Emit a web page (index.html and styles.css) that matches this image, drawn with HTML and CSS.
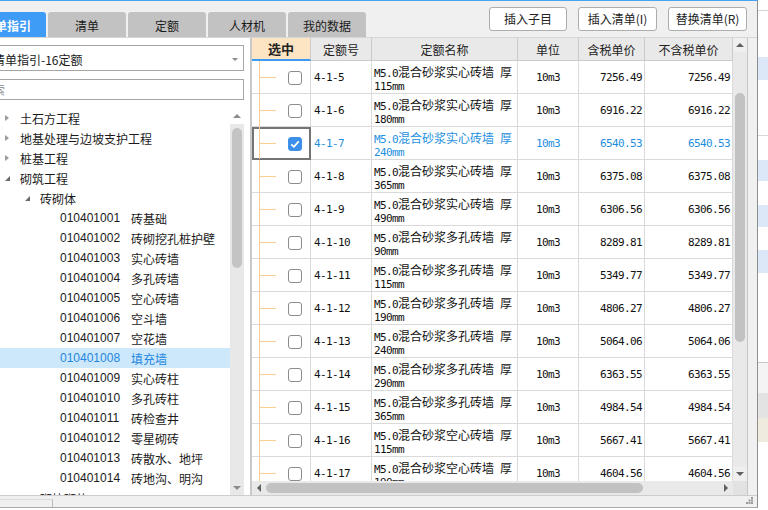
FILE: index.html
```html
<!DOCTYPE html>
<html lang="zh-CN">
<head>
<meta charset="utf-8">
<title>清单指引</title>
<link rel="stylesheet" href="styles.css">
</head>
<body>
<div class="desk">
  <div class="app">
    <div class="topbar">
      <div class="tabs">
        <div class="tab active">清单指引</div>
        <div class="tab">清单</div>
        <div class="tab">定额</div>
        <div class="tab">人材机</div>
        <div class="tab">我的数据</div>
      </div>
      <div class="actions">
        <button class="btn w78">插入子目</button>
        <button class="btn w79">插入清单(I)</button>
        <button class="btn w79">替换清单(R)</button>
      </div>
    </div>
    <div class="main">
      <div class="left">
        <div class="select"><span class="sel-text">清单指引-16定额</span><span class="caret"></span></div>
        <div class="search"><span class="ph">搜索</span></div>
        <div class="tree">
          <div class="tree-list">
            <div class="trow l1"><span class="tw"><span class="ar-r"></span></span>土石方工程</div>
            <div class="trow l1"><span class="tw"><span class="ar-r"></span></span>地基处理与边坡支护工程</div>
            <div class="trow l1"><span class="tw"><span class="ar-r"></span></span>桩基工程</div>
            <div class="trow l1"><span class="tw"><span class="ar-d"></span></span>砌筑工程</div>
            <div class="trow l2"><span class="tw"><span class="ar-d"></span></span>砖砌体</div>
            <div class="trow l3"><span class="code">010401001</span>砖基础</div>
            <div class="trow l3"><span class="code">010401002</span>砖砌挖孔桩护壁</div>
            <div class="trow l3"><span class="code">010401003</span>实心砖墙</div>
            <div class="trow l3"><span class="code">010401004</span>多孔砖墙</div>
            <div class="trow l3"><span class="code">010401005</span>空心砖墙</div>
            <div class="trow l3"><span class="code">010401006</span>空斗墙</div>
            <div class="trow l3"><span class="code">010401007</span>空花墙</div>
            <div class="trow l3 on"><span class="code">010401008</span>填充墙</div>
            <div class="trow l3"><span class="code">010401009</span>实心砖柱</div>
            <div class="trow l3"><span class="code">010401010</span>多孔砖柱</div>
            <div class="trow l3"><span class="code">010401011</span>砖检查井</div>
            <div class="trow l3"><span class="code">010401012</span>零星砌砖</div>
            <div class="trow l3"><span class="code">010401013</span>砖散水、地坪</div>
            <div class="trow l3"><span class="code">010401014</span>砖地沟、明沟</div>
            <div class="trow l2"><span class="tw"><span class="ar-d"></span></span>砌块砌体</div>
          </div>
          <div class="tscroll">
            <div class="tbtn top"><span class="up lt"></span></div>
            <div class="ttrack"><div class="tthumb"></div></div>
            <div class="tbtn bot"><span class="down lt"></span></div>
          </div>
        </div>
      </div>
      <div class="splitter"></div>
      <div class="gridwrap">
        <div class="grid">
          <div class="gmain">
            <div class="thead">
              <div class="th selh">选中</div>
              <div class="th">定额号</div>
              <div class="th">定额名称</div>
              <div class="th">单位</div>
              <div class="th">含税单价</div>
              <div class="th">不含税单价</div>
            </div>
            <div class="tbody">
              <div class="row">
                <div class="td chk"><span class="box"></span></div>
                <div class="td code2 m">4-1-5</div>
                <div class="td name"><span><span class="m">M5.0</span>混合砂浆实心砖墙<span class="m"> </span>厚</span><span class="m">115mm</span></div>
                <div class="td unit m">10m3</div>
                <div class="td price m">7256.49</div>
                <div class="td price m">7256.49</div>
              </div>
              <div class="row">
                <div class="td chk"><span class="box"></span></div>
                <div class="td code2 m">4-1-6</div>
                <div class="td name"><span><span class="m">M5.0</span>混合砂浆实心砖墙<span class="m"> </span>厚</span><span class="m">180mm</span></div>
                <div class="td unit m">10m3</div>
                <div class="td price m">6916.22</div>
                <div class="td price m">6916.22</div>
              </div>
              <div class="row sel">
                <div class="td chk focus"><span class="box checked"><svg viewBox="0 0 14 14" width="14" height="14"><polyline points="3.3,7.3 5.9,9.8 10.7,4.4" fill="none" stroke="#fff" stroke-width="1.8"/></svg></span></div>
                <div class="td code2 m">4-1-7</div>
                <div class="td name"><span><span class="m">M5.0</span>混合砂浆实心砖墙<span class="m"> </span>厚</span><span class="m">240mm</span></div>
                <div class="td unit m">10m3</div>
                <div class="td price m">6540.53</div>
                <div class="td price m">6540.53</div>
              </div>
              <div class="row">
                <div class="td chk"><span class="box"></span></div>
                <div class="td code2 m">4-1-8</div>
                <div class="td name"><span><span class="m">M5.0</span>混合砂浆实心砖墙<span class="m"> </span>厚</span><span class="m">365mm</span></div>
                <div class="td unit m">10m3</div>
                <div class="td price m">6375.08</div>
                <div class="td price m">6375.08</div>
              </div>
              <div class="row">
                <div class="td chk"><span class="box"></span></div>
                <div class="td code2 m">4-1-9</div>
                <div class="td name"><span><span class="m">M5.0</span>混合砂浆实心砖墙<span class="m"> </span>厚</span><span class="m">490mm</span></div>
                <div class="td unit m">10m3</div>
                <div class="td price m">6306.56</div>
                <div class="td price m">6306.56</div>
              </div>
              <div class="row">
                <div class="td chk"><span class="box"></span></div>
                <div class="td code2 m">4-1-10</div>
                <div class="td name"><span><span class="m">M5.0</span>混合砂浆多孔砖墙<span class="m"> </span>厚</span><span class="m">90mm</span></div>
                <div class="td unit m">10m3</div>
                <div class="td price m">8289.81</div>
                <div class="td price m">8289.81</div>
              </div>
              <div class="row">
                <div class="td chk"><span class="box"></span></div>
                <div class="td code2 m">4-1-11</div>
                <div class="td name"><span><span class="m">M5.0</span>混合砂浆多孔砖墙<span class="m"> </span>厚</span><span class="m">115mm</span></div>
                <div class="td unit m">10m3</div>
                <div class="td price m">5349.77</div>
                <div class="td price m">5349.77</div>
              </div>
              <div class="row">
                <div class="td chk"><span class="box"></span></div>
                <div class="td code2 m">4-1-12</div>
                <div class="td name"><span><span class="m">M5.0</span>混合砂浆多孔砖墙<span class="m"> </span>厚</span><span class="m">190mm</span></div>
                <div class="td unit m">10m3</div>
                <div class="td price m">4806.27</div>
                <div class="td price m">4806.27</div>
              </div>
              <div class="row">
                <div class="td chk"><span class="box"></span></div>
                <div class="td code2 m">4-1-13</div>
                <div class="td name"><span><span class="m">M5.0</span>混合砂浆多孔砖墙<span class="m"> </span>厚</span><span class="m">240mm</span></div>
                <div class="td unit m">10m3</div>
                <div class="td price m">5064.06</div>
                <div class="td price m">5064.06</div>
              </div>
              <div class="row">
                <div class="td chk"><span class="box"></span></div>
                <div class="td code2 m">4-1-14</div>
                <div class="td name"><span><span class="m">M5.0</span>混合砂浆多孔砖墙<span class="m"> </span>厚</span><span class="m">290mm</span></div>
                <div class="td unit m">10m3</div>
                <div class="td price m">6363.55</div>
                <div class="td price m">6363.55</div>
              </div>
              <div class="row">
                <div class="td chk"><span class="box"></span></div>
                <div class="td code2 m">4-1-15</div>
                <div class="td name"><span><span class="m">M5.0</span>混合砂浆多孔砖墙<span class="m"> </span>厚</span><span class="m">365mm</span></div>
                <div class="td unit m">10m3</div>
                <div class="td price m">4984.54</div>
                <div class="td price m">4984.54</div>
              </div>
              <div class="row">
                <div class="td chk"><span class="box"></span></div>
                <div class="td code2 m">4-1-16</div>
                <div class="td name"><span><span class="m">M5.0</span>混合砂浆空心砖墙<span class="m"> </span>厚</span><span class="m">115mm</span></div>
                <div class="td unit m">10m3</div>
                <div class="td price m">5667.41</div>
                <div class="td price m">5667.41</div>
              </div>
              <div class="row">
                <div class="td chk"><span class="box"></span></div>
                <div class="td code2 m">4-1-17</div>
                <div class="td name"><span><span class="m">M5.0</span>混合砂浆空心砖墙<span class="m"> </span>厚</span><span class="m">190mm</span></div>
                <div class="td unit m">10m3</div>
                <div class="td price m">4604.56</div>
                <div class="td price m">4604.56</div>
              </div>
            </div>
          </div>
          <div class="vscroll">
            <div class="sbtn"><span class="up"></span></div>
            <div class="vtrack"><div class="vthumb"></div></div>
            <div class="sbtn"><span class="down"></span></div>
          </div>
        </div>
        <div class="hbar">
          <div class="hscroll">
            <div class="hbtn"><span class="lft"></span></div>
            <div class="hthumb"></div>
            <div class="hspace"></div>
            <div class="hbtn"><span class="rgt"></span></div>
          </div>
          <div class="corner"></div>
        </div>
      </div>
      <div class="gutter"></div>
    </div>
    <div class="status">
      <div class="stab"></div>
      <svg class="grip" viewBox="0 0 7 7" width="7" height="7"><rect x="5" y="0" width="2" height="2" fill="#9a9a9a"/><rect x="2.5" y="2.5" width="2" height="2" fill="#9a9a9a"/><rect x="5" y="2.5" width="2" height="2" fill="#9a9a9a"/><rect x="0" y="5" width="2" height="2" fill="#9a9a9a"/><rect x="2.5" y="5" width="2" height="2" fill="#9a9a9a"/><rect x="5" y="5" width="2" height="2" fill="#9a9a9a"/></svg>
    </div>
  </div>
  <div class="bgwin"></div>
</div>
</body>
</html>
```
FILE: styles.css
```css
* { box-sizing: border-box; }
html, body { margin: 0; padding: 0; }
body {
  width: 768px; height: 510px; overflow: hidden; background: #fff;
  font-family: "Noto Sans CJK SC", "Liberation Sans", sans-serif;
  font-size: 12px; color: #1a1a1a;
}
.desk { display: flex; width: 768px; height: 510px; align-items: flex-start; }
.app {
  width: 758px; height: 508px; flex: none; display: flex; flex-direction: column;
  border-top: 1px solid #4aa3f2; border-right: 1px solid #8e8e8e; border-bottom: 1px solid #ababab;
  background: #f0f0f0; overflow: hidden;
}
.bgwin {
  flex: 1; height: 510px;
  background: linear-gradient(to bottom,
    #fff 0 10px, #d4d4d4 10px 11px, #fff 11px 57px, #dce7f7 57px 80px, #fff 80px 135px,
    #d8d8d8 135px 136px, #fff 136px 160px, #dce7f7 160px 181px, #fff 181px 205px,
    #dce7f7 205px 227px, #fff 227px 250px, #dce7f7 250px 273px, #fff 273px 362px,
    #c8c8c8 362px 363px, #f4f4f4 363px 393px, #e3e3e3 393px 418px, #efecdf 418px 442px, #fff 442px);
}

/* top bar */
.topbar {
  height: 37px; flex: none; display: flex; justify-content: space-between;
  border-bottom: 1px solid #d6d6d6; background: #f0f0f0;
}
.tabs { display: flex; gap: 2px; margin-left: -32px; align-self: flex-end; }
.tab {
  width: 78px; height: 25px; line-height: 25px; padding-top: 1px; text-align: center;
  background: #c2c2c2; color: #1a1a1a; border-radius: 3px 3px 0 0; font-size: 12px;
}
.tab.active { background: #3f9cf6; color: #fff; font-weight: bold; }
.actions { display: flex; gap: 11px; align-items: center; margin-right: 10px; }
.btn {
  height: 24px; padding: 0; background: #fff; border: 1px solid #adadad; border-radius: 3px;
  font-family: "Noto Sans CJK SC", "Liberation Sans", sans-serif; font-size: 12px; color: #222;
  line-height: 22px;
}
.w78 { width: 78px; }
.w79 { width: 79px; }

/* main */
.main { height: 457px; flex: none; display: flex; }
.left { width: 244px; flex: none; background: #fff; padding-top: 7px; display: flex; flex-direction: column; }
.select {
  height: 26px; border: 1px solid #a6a6a6; border-left: none; display: flex; align-items: center;
  justify-content: space-between; padding-top: 2px; overflow: hidden; white-space: nowrap;
}
.sel-text { margin-left: -7px; color: #1a1a1a; }
.caret {
  width: 0; height: 0; border-top: 3px solid #8a8a8a; border-left: 3px solid transparent;
  border-right: 3px solid transparent; margin-right: 5px;
}
.search {
  height: 21px; margin-top: 8px; border: 1px solid #a6a6a6; border-left: none;
  display: flex; align-items: center; overflow: hidden; white-space: nowrap;
}
.ph { margin-left: -19px; color: #8a8a8a; }
.tree { margin-top: 8px; flex: 1; display: flex; overflow: hidden; min-height: 0; }
.tree-list { width: 230px; flex: none; overflow: hidden; font-family: "Liberation Sans", "Noto Sans CJK SC", sans-serif; }
.trow { height: 20px; display: flex; align-items: center; white-space: nowrap; color: #1a1a1a; }
.trow.l1 { padding-left: 5px; }
.trow.l2 { padding-left: 25px; }
.trow.l3 { padding-left: 60px; }
.trow.on { background: #cce8fa; color: #1e86e2; }
.tw { width: 15px; display: flex; align-items: center; }
.ar-r {
  width: 0; height: 0; border-left: 4px solid #9a9a9a; border-top: 3.5px solid transparent;
  border-bottom: 3.5px solid transparent;
}
.ar-d {
  width: 0; height: 0; border-bottom: 5px solid #6a6a6a; border-left: 5px solid transparent;
}
.code { width: 71px; flex: none; }
.tscroll { width: 14px; flex: none; display: flex; flex-direction: column; background: #e8e8e8; }
.tbtn { height: 16px; display: flex; align-items: center; justify-content: center; }
.tbtn.top { background: #fff; }
.tbtn.bot { height: 14px; }
.ttrack { flex: 1; }
.tthumb { width: 10px; height: 140px; margin: 4px 0 0 2px; background: #c4c4c4; border-radius: 5px; }
.splitter { width: 6px; flex: none; background: #fff; }
.gutter { width: 9px; flex: none; background: #f0f0f0; }

/* grid */
.gridwrap {
  width: 498px; flex: none; display: flex; flex-direction: column; background: #fff;
  border-left: 2px solid #c9c9c9; border-right: 1px solid #c6c6c6;
}
.grid { height: 443px; display: flex; }
.gmain { width: 481px; display: flex; flex-direction: column; overflow: hidden; }
.thead, .row { display: grid; grid-template-columns: 59px 61px 146px 61px 66px 88px; }
.thead { height: 23px; flex: none; background: #e9e9e9; }
.th {
  border-right: 1px solid #cbcbcb; border-bottom: 1px solid #cbcbcb; display: flex;
  align-items: center; justify-content: center; color: #222; font-size: 12px;
}
.th.selh { background: #fde4c3; border-bottom: 2px solid #3d9bf3; font-weight: bold; font-size: 13px; }
.tbody { flex: 1; overflow: hidden; }
.row { height: 33px; }
.td {
  border-right: 1px solid #dadada; border-bottom: 1px solid #dadada; display: flex;
  align-items: center; padding-top: 1px; overflow: hidden; white-space: nowrap; color: #111;
}
.row.sel .td { color: #1e8fe0; }
.m { font-family: "DejaVu Sans Mono", "Liberation Mono", monospace; font-size: 11px; letter-spacing: -0.62px; }
.chk { position: relative; padding-left: 36px; }
.chk::before {
  content: ""; position: absolute; left: 7px; top: 0; bottom: -1px; width: 1px; background: #fbcf93;
}
.chk::after {
  content: ""; position: absolute; left: 7px; top: 16px; width: 17px; height: 1px; background: #fbcf93;
}
.chk.focus { outline: 2px solid #747474; outline-offset: -2px; }
.box {
  width: 14px; height: 14px; border: 1px solid #8c8c8c; border-radius: 3px; background: #fff;
  display: block; position: relative;
}
.box.checked { background: #3d8fea; border-color: #3d8fea; }
.box svg { position: absolute; left: -1px; top: -1px; }
.code2 { padding-left: 3px; }
.name {
  flex-direction: column; align-items: flex-start; justify-content: center; padding: 4px 0 0 2px;
  font-size: 12px; line-height: 13px;
}
.name > span { display: block; line-height: 13px; }
.unit { justify-content: center; }
.price { justify-content: flex-end; padding-right: 2px; }

/* scrollbars */
.vscroll { width: 14px; flex: none; display: flex; flex-direction: column; background: #e9e9e9; }
.sbtn { height: 14px; flex: none; display: flex; align-items: center; justify-content: center; background: #efefef; }
.vtrack { flex: 1; }
.vthumb { width: 10px; height: 249px; margin: 41px 0 0 2px; background: #c2c2c2; border-radius: 5px; }
.up { width: 0; height: 0; border-bottom: 4px solid #5f5f5f; border-left: 4px solid transparent; border-right: 4px solid transparent; }
.down { width: 0; height: 0; border-top: 4px solid #5f5f5f; border-left: 4px solid transparent; border-right: 4px solid transparent; }
.up.lt { border-bottom-color: #8c8c8c; }
.down.lt { border-top-color: #8c8c8c; }
.hbar { height: 14px; flex: none; display: flex; }
.hscroll { width: 481px; display: flex; align-items: center; background: #e9e9e9; }
.hbtn { width: 14px; height: 14px; flex: none; display: flex; align-items: center; justify-content: center; }
.hthumb { width: 377px; height: 10px; background: #c2c2c2; border-radius: 5px; flex: none; }
.hspace { flex: 1; }
.lft { width: 0; height: 0; border-right: 4px solid #5f5f5f; border-top: 4px solid transparent; border-bottom: 4px solid transparent; }
.rgt { width: 0; height: 0; border-left: 4px solid #5f5f5f; border-top: 4px solid transparent; border-bottom: 4px solid transparent; }
.corner { width: 14px; background: #e2e2e2; }

/* status */
.status {
  height: 12px; flex: none; border-top: 1px solid #cdcdcd; background: #f0f0f0;
  display: flex; justify-content: space-between; align-items: flex-start;
}
.stab { width: 53px; height: 10px; margin-top: 3px; border-top: 1px solid #dadada; border-right: 1px solid #bdbdbd; }
.grip { margin: 1px 4px 0 0; }
```
